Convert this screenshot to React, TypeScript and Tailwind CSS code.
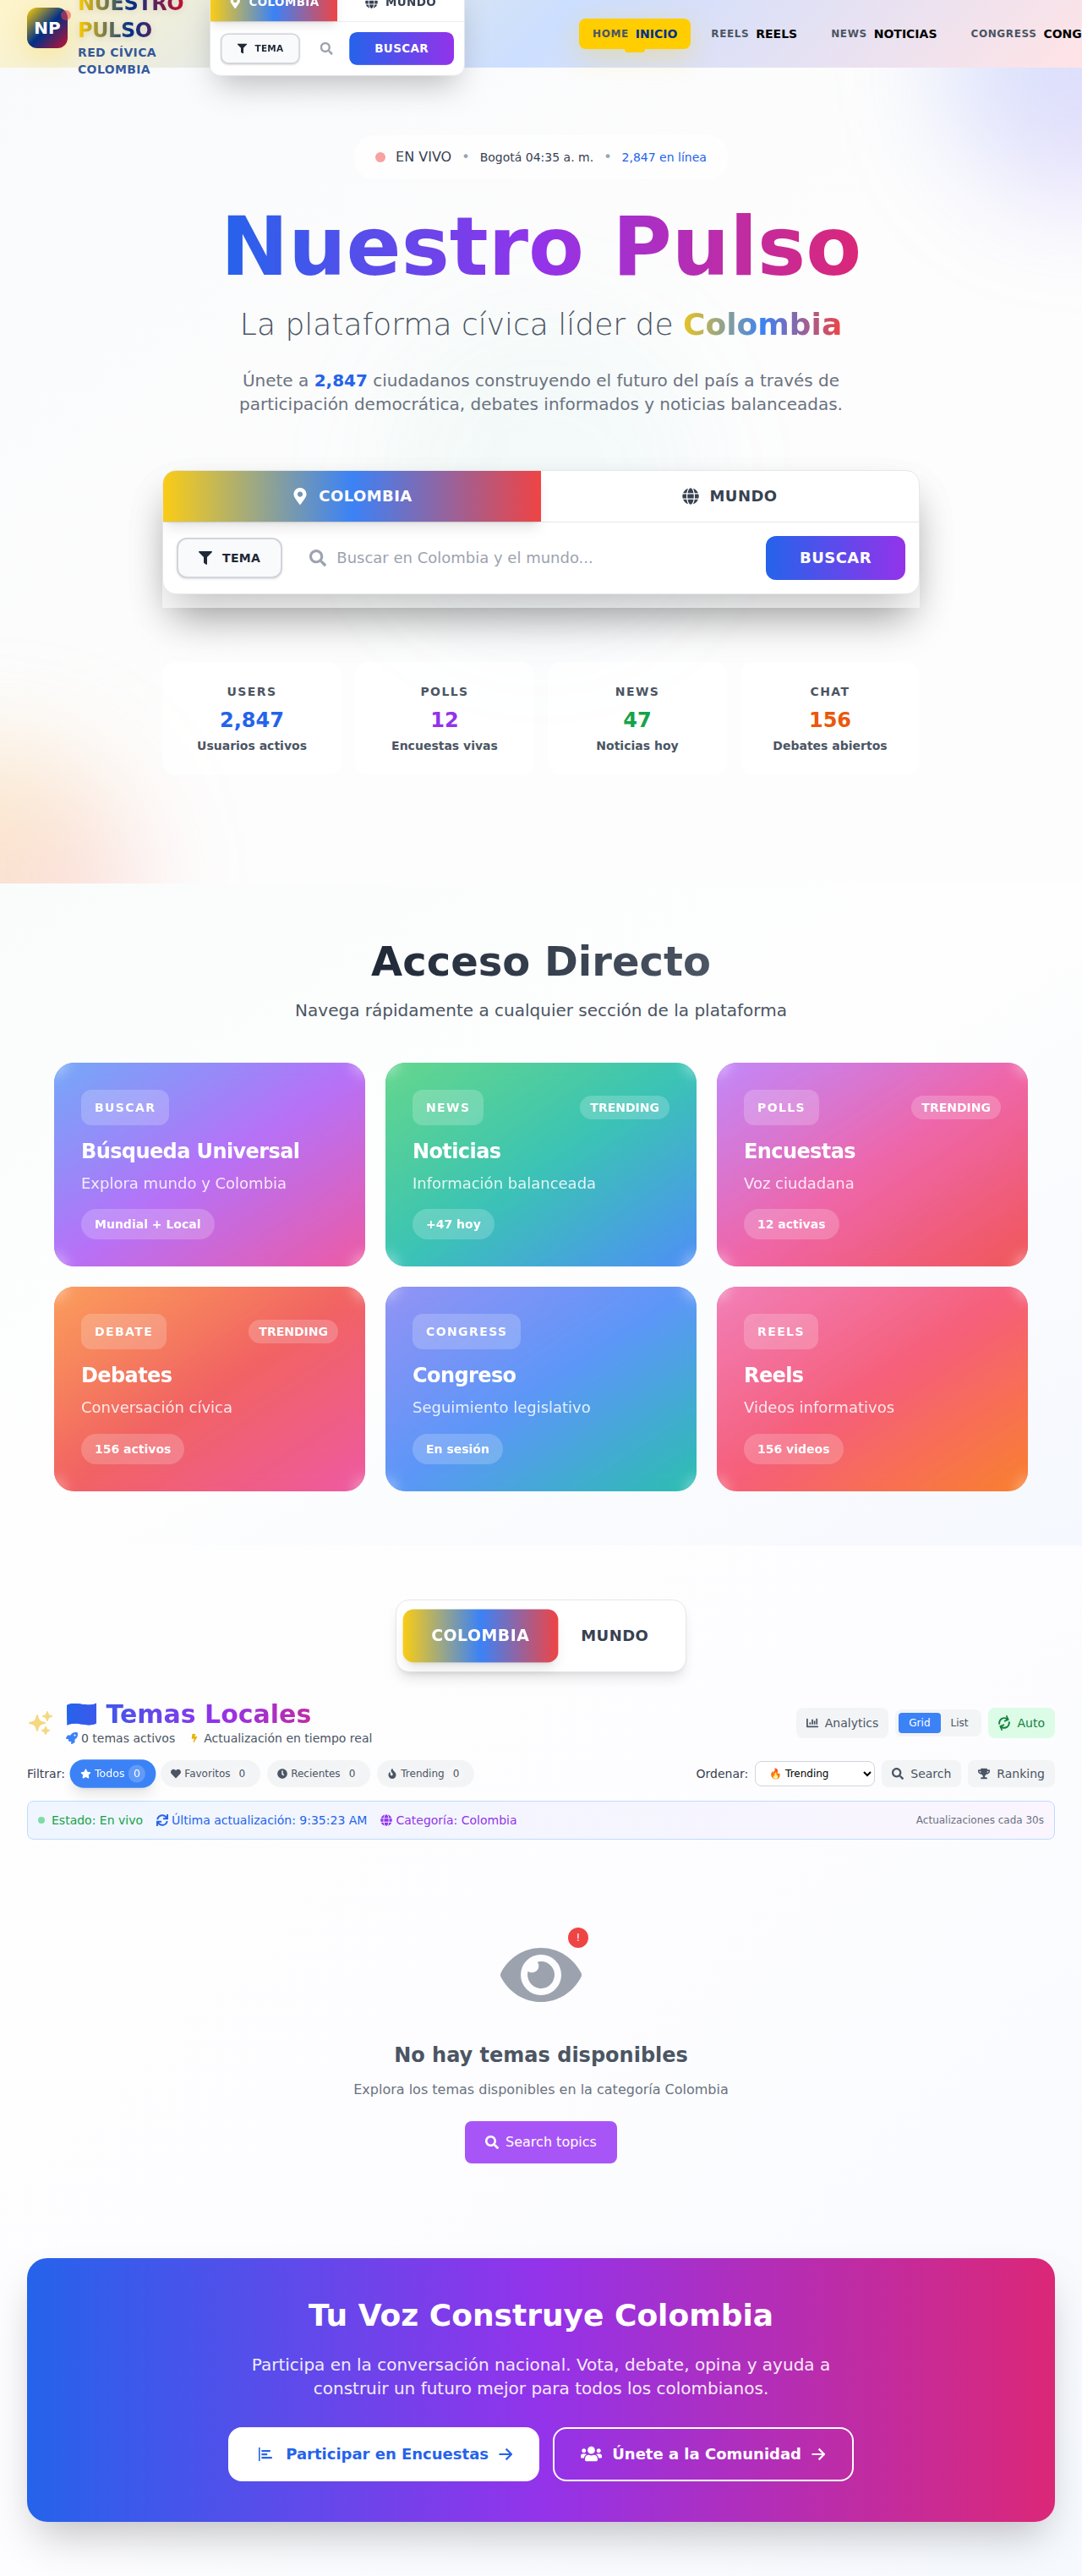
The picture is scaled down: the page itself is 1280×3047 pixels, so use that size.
import React from "react";
import {
  FaMapMarkerAlt,
  FaGlobe,
  FaFilter,
  FaSearch,
  FaRocket,
  FaBolt,
  FaChartBar,
  FaSync,
  FaStar,
  FaHeart,
  FaClock,
  FaFire,
  FaTrophy,
  FaEye,
  FaUsers,
} from "react-icons/fa";
import { HiSparkles } from "react-icons/hi2";

function ArrowIcon() {
  return (
    <svg className="h-4 w-4" viewBox="0 0 16 16" fill="none" stroke="currentColor" strokeWidth="2.2">
      <path d="M0.5 8h14M8.6 1.6 15 8l-6.4 6.4" />
    </svg>
  );
}

function PollIcon() {
  return (
    <svg className="h-4 w-4" viewBox="0 0 16 16" fill="currentColor">
      <path d="M0 0h1.6v16H0zM3.4 3h10.4v2.2H3.4zM3.4 7h6.8v2.2H3.4zM3.4 11h12.4v2.2H3.4z" />
    </svg>
  );
}

function SearchWidget({ placeholder }: { placeholder: string }) {
  return (
    <div className="mb-4 w-full overflow-hidden rounded-2xl border border-[#e5e7eb] bg-white shadow-[0_25px_50px_-12px_rgba(0,0,0,0.25)]">
      <div className="flex border-b border-[#e5e7eb]">
        <div className="flex h-[60px] flex-1 items-center justify-center gap-3 bg-[linear-gradient(to_right,#facc15,#3b82f6,#ef4444)] text-lg font-bold tracking-wide text-white shadow-[0_10px_15px_-3px_rgba(0,0,0,0.1),0_4px_6px_-4px_rgba(0,0,0,0.1)]">
          <FaMapMarkerAlt className="h-5 w-5" />
          COLOMBIA
        </div>
        <div className="flex h-[60px] flex-1 items-center justify-center gap-3 text-lg font-bold tracking-wide text-[#374151]">
          <FaGlobe className="h-5 w-5" />
          MUNDO
        </div>
      </div>
      <div className="flex items-center gap-4 p-4">
        <div className="flex h-12 shrink-0 items-center gap-3 rounded-xl border-2 border-[#d1d5db] bg-[#f9fafb] px-6 text-sm font-bold tracking-wide text-[#1f2937] shadow-sm">
          <FaFilter className="h-4 w-4" />
          TEMA
        </div>
        <div className="flex min-w-0 flex-1 items-center gap-3 px-4">
          <FaSearch className="h-5 w-5 shrink-0 text-[#9ca3af]" />
          <input
            className="w-full min-w-0 text-lg text-[#111827] outline-none placeholder:text-[#9ca3af]"
            placeholder={placeholder}
          />
        </div>
        <div className="shrink-0 rounded-xl bg-[linear-gradient(to_right,#2563eb,#9333ea)] px-10 py-3 text-lg font-bold tracking-wide text-white">
          BUSCAR
        </div>
      </div>
    </div>
  );
}

const navItems = [
  { tag: "HOME", label: "INICIO", active: true },
  { tag: "REELS", label: "REELS" },
  { tag: "NEWS", label: "NOTICIAS" },
  { tag: "CONGRESS", label: "CONGRESO" },
];

function Header() {
  return (
    <header className="relative z-10 flex h-20 items-center bg-[linear-gradient(135deg,rgba(255,205,0,0.2)_0%,rgba(0,94,255,0.2)_50%,rgba(255,30,50,0.12)_100%)] pl-8">
      <div className="flex shrink-0 items-center gap-3">
        <div className="relative h-12 w-12">
          <div className="flex h-12 w-12 -translate-y-[7px] items-center justify-center rounded-xl bg-[linear-gradient(135deg,#ffcd00_0%,#003087_50%,#c8102e_100%)] text-xl font-bold text-white shadow-[0_8px_32px_rgba(255,205,0,0.3)]">
            NP
          </div>
          <div className="absolute -right-1 -top-1 h-3 w-3 rounded-full bg-[#ef4444]/55" />
        </div>
        <div className="w-[125px]">
          <div className="bg-[linear-gradient(90deg,#ffcd00_0%,#003087_50%,#c8102e_100%)] bg-clip-text text-2xl font-bold tracking-[-0.02em] text-transparent drop-shadow-[0_2px_4px_rgba(0,0,0,0.1)]">
            NUESTRO PULSO
          </div>
          <div className="text-sm font-bold tracking-wide text-[#003087]/80">RED CÍVICA COLOMBIA</div>
        </div>
      </div>
      <div className="ml-[31px] flex w-[302px] shrink-0 items-center justify-center">
        <div className="w-[402px] shrink-0 scale-75">
          <SearchWidget placeholder="" />
        </div>
      </div>
      <nav className="ml-[135px] flex shrink-0 items-center gap-2">
        {navItems.map((n) => (
          <div
            key={n.tag}
            className={
              n.active
                ? "relative flex h-9 items-center gap-2 rounded-lg bg-[#ffcd00] px-4 text-[#003087] shadow-[0_8px_32px_rgba(255,205,0,0.3)]"
                : "flex h-9 items-center gap-2 rounded-lg px-4 text-black"
            }
          >
            <span className="text-xs font-bold tracking-wider text-[#4b5563]">{n.tag}</span>
            <span className="text-sm font-bold">{n.label}</span>
            {n.active && (
              <span className="absolute -bottom-1 left-1/2 h-1 w-6 -translate-x-1/2 rounded-b-sm bg-[#ffcd00]" />
            )}
          </div>
        ))}
      </nav>
    </header>
  );
}

const stats = [
  { tag: "USERS", value: "2,847", label: "Usuarios activos", color: "text-[#2563eb]" },
  { tag: "POLLS", value: "12", label: "Encuestas vivas", color: "text-[#9333ea]" },
  { tag: "NEWS", value: "47", label: "Noticias hoy", color: "text-[#16a34a]" },
  { tag: "CHAT", value: "156", label: "Debates abiertos", color: "text-[#ea580c]" },
];

function Hero() {
  return (
    <section className="relative h-[965px] overflow-hidden bg-[linear-gradient(to_bottom_right,#f9fafc,#fdfdfd,#fdfdfe)] pt-20">
      <div className="absolute -right-40 -top-40 h-80 w-80 rounded-full bg-[linear-gradient(to_bottom_right,rgba(96,165,250,0.28),rgba(192,132,252,0.28))] blur-3xl" />
      <div className="absolute -bottom-40 -left-40 h-80 w-80 rounded-full bg-[linear-gradient(to_bottom_right,rgba(250,204,21,0.28),rgba(244,114,182,0.28))] blur-3xl" />
      <div className="absolute left-1/2 top-1/2 h-96 w-96 -translate-x-1/2 -translate-y-1/2 rounded-full bg-[linear-gradient(to_bottom_right,rgba(74,222,128,0.05),rgba(96,165,250,0.06))] blur-3xl" />
      <div className="relative mx-auto flex w-[896px] flex-col items-center text-center">
        <div className="flex h-[52px] items-center gap-3 rounded-3xl bg-white/80 px-[25px]">
          <span className="h-3 w-3 rounded-full bg-[#ef4444]/50" />
          <span className="text-base text-[#374151]">EN VIVO</span>
          <span className="text-base text-[#9ca3af]">•</span>
          <span className="text-sm text-[#374151]">Bogotá 04:35 a. m.</span>
          <span className="text-base text-[#9ca3af]">•</span>
          <span className="text-sm text-[#2563eb]">2,847 en línea</span>
        </div>
        <h1 className="mt-8 bg-[linear-gradient(to_right,#2563eb,#9333ea,#db2777)] bg-clip-text text-[96px] font-bold leading-none text-transparent">
          Nuestro Pulso
        </h1>
        <h2 className="mt-6 text-4xl font-extralight text-[#4b5563]">
          La plataforma cívica líder de{" "}
          <span className="bg-[linear-gradient(to_right,#e8c420,#3b82f6,#ef4444)] bg-clip-text font-bold text-transparent">
            Colombia
          </span>
        </h2>
        <p className="mt-8 w-[768px] text-xl leading-7 text-[#6b7280]">
          Únete a <span className="font-bold text-[#2563eb]">2,847</span> ciudadanos construyendo el futuro del país a
          través de participación democrática, debates informados y noticias balanceadas.
        </p>
        <div className="mt-16 flow-root w-full text-left shadow-[0_25px_50px_-12px_rgba(0,0,0,0.25)]">
          <SearchWidget placeholder="Buscar en Colombia y el mundo..." />
        </div>
        <div className="mt-16 grid w-full grid-cols-4 gap-4">
          {stats.map((s) => (
            <div key={s.tag} className="rounded-2xl bg-white/80 p-[25px]">
              <div className="text-sm font-bold tracking-widest text-[#4b5563]">{s.tag}</div>
              <div className={`mt-2 text-2xl font-bold ${s.color}`}>{s.value}</div>
              <div className="mt-1 text-sm font-bold text-[#4b5563]">{s.label}</div>
            </div>
          ))}
        </div>
      </div>
    </section>
  );
}

const cards = [
  {
    tag: "BUSCAR",
    title: "Búsqueda Universal",
    desc: "Explora mundo y Colombia",
    pill: "Mundial + Local",
    bg: "bg-[linear-gradient(to_bottom_right,#3b82f6,#a855f7,#ec4899)]",
  },
  {
    tag: "NEWS",
    title: "Noticias",
    desc: "Información balanceada",
    pill: "+47 hoy",
    trending: true,
    bg: "bg-[linear-gradient(to_bottom_right,#22c55e,#14b8a6,#3b82f6)]",
  },
  {
    tag: "POLLS",
    title: "Encuestas",
    desc: "Voz ciudadana",
    pill: "12 activas",
    trending: true,
    bg: "bg-[linear-gradient(to_bottom_right,#a855f7,#ec4899,#ef4444)]",
  },
  {
    tag: "DEBATE",
    title: "Debates",
    desc: "Conversación cívica",
    pill: "156 activos",
    trending: true,
    bg: "bg-[linear-gradient(to_bottom_right,#f97316,#ef4444,#ec4899)]",
  },
  {
    tag: "CONGRESS",
    title: "Congreso",
    desc: "Seguimiento legislativo",
    pill: "En sesión",
    bg: "bg-[linear-gradient(to_bottom_right,#6366f1,#3b82f6,#14b8a6)]",
  },
  {
    tag: "REELS",
    title: "Reels",
    desc: "Videos informativos",
    pill: "156 videos",
    bg: "bg-[linear-gradient(to_bottom_right,#ec4899,#f43f5e,#f97316)]",
  },
];

function QuickAccess() {
  return (
    <section className="bg-[linear-gradient(to_bottom_right,#fafcfc,#fefefe,#f5f8fe)] py-16">
      <div className="mx-auto w-[1152px] text-center">
        <h2 className="flex justify-center text-5xl font-bold leading-[56px]">
          <span className="bg-[linear-gradient(to_right,#1f2937,#4b5563)] bg-clip-text text-transparent">
            Acceso Directo
          </span>
        </h2>
        <p className="mt-4 text-xl leading-7 text-[#4b5563]">Navega rápidamente a cualquier sección de la plataforma</p>
        <div className="mt-12 grid grid-cols-3 gap-6 text-left">
          {cards.map((c) => (
            <div key={c.tag} className={`relative overflow-hidden rounded-3xl ${c.bg}`}>
              <div className="absolute inset-0 bg-[linear-gradient(to_bottom_right,rgba(255,255,255,0.3),rgba(255,255,255,0.17),rgba(255,255,255,0.1))] backdrop-blur-sm" />
              <div className="relative flex flex-col items-start p-8 text-white">
                <div className="flex w-full items-center justify-between">
                  <span className="flex h-[41.5px] items-center rounded-xl bg-white/20 px-4 text-sm font-bold tracking-widest">
                    {c.tag}
                  </span>
                  {c.trending && (
                    <span className="rounded-full bg-white/20 px-3 py-1 text-sm font-bold">TRENDING</span>
                  )}
                </div>
                <h3 className="mt-[15.4px] text-2xl font-bold tracking-tight">{c.title}</h3>
                <p className="mt-2 text-lg leading-7 text-white/85">{c.desc}</p>
                <span className="mt-[16.6px] rounded-full bg-white/20 px-4 py-2 text-sm font-bold">{c.pill}</span>
              </div>
            </div>
          ))}
        </div>
      </div>
    </section>
  );
}

const filters = [
  { label: "Favoritos", icon: FaHeart },
  { label: "Recientes", icon: FaClock },
  { label: "Trending", icon: FaFire },
];

function Topics() {
  return (
    <div className="px-8 pt-16">
      <div className="flex justify-center">
        <div className="flex rounded-2xl border border-[#e5e7eb] bg-white p-3 shadow-[0_10px_15px_-3px_rgba(0,0,0,0.1),0_4px_6px_-4px_rgba(0,0,0,0.1)]">
          <div className="scale-105 rounded-xl bg-[linear-gradient(to_right,#facc15,#3b82f6,#ef4444)] px-8 py-4 text-lg font-bold tracking-wide text-white shadow-[0_10px_15px_-3px_rgba(0,0,0,0.1),0_4px_6px_-4px_rgba(0,0,0,0.1)]">
            COLOMBIA
          </div>
          <div className="rounded-xl px-8 py-4 text-lg font-bold tracking-wide text-[#374151]">MUNDO</div>
        </div>
      </div>

      <div className="mt-8 flex items-center justify-between">
        <div className="flex items-center gap-3.5">
          <HiSparkles className="h-8 w-8 text-[#f0c030] opacity-60" />
          <div>
            <h2 className="bg-[linear-gradient(to_right,#2563eb,#9333ea,#db2777)] bg-clip-text text-3xl font-bold leading-9 text-transparent">
              🇨🇴 Temas Locales
            </h2>
            <div className="flex items-center gap-4 text-sm text-[#4b5563]">
              <span className="flex items-center gap-1">
                <FaRocket className="text-[#3b82f6]" />0 temas activos
              </span>
              <span className="flex items-center gap-1">
                <FaBolt className="scale-75 text-[#eab308]" />
                Actualización en tiempo real
              </span>
            </div>
          </div>
        </div>
        <div className="flex items-center gap-2 text-sm text-[#4b5563]">
          <div className="flex items-center gap-2 rounded-lg bg-[#f3f4f6] px-3 py-2">
            <FaChartBar />
            Analytics
          </div>
          <div className="flex rounded-lg bg-[#f3f4f6] p-1 text-xs">
            <span className="rounded bg-[#3b82f6] px-3 py-1 text-white">Grid</span>
            <span className="px-3 py-1">List</span>
          </div>
          <div className="flex items-center gap-2 rounded-lg bg-[#dcfce7] px-3 py-2 text-[#15803d]">
            <FaSync className="-rotate-[25deg]" />
            Auto
          </div>
        </div>
      </div>

      <div className="mt-4 flex items-center justify-between text-sm text-[#374151]">
        <div className="flex items-center gap-2">
          <span>Filtrar:</span>
          <span className="flex scale-105 items-center gap-1 rounded-full bg-[#3b82f6] px-3 py-1.5 text-xs text-white shadow-[0_10px_15px_-3px_rgba(0,0,0,0.1),0_4px_6px_-4px_rgba(0,0,0,0.1)]">
            <FaStar />
            Todos
            <span className="rounded-full bg-white/20 px-1.5 py-0.5">0</span>
          </span>
          {filters.map(({ label, icon: Icon }) => (
            <span
              key={label}
              className="flex items-center gap-1 rounded-full bg-[#f3f4f6] px-3 py-1.5 text-xs text-[#4b5563]"
            >
              <Icon />
              {label}
              <span className="rounded-full bg-white/20 px-1.5 py-0.5">0</span>
            </span>
          ))}
        </div>
        <div className="flex items-center gap-2">
          <span>Ordenar:</span>
          <select className="h-[30px] w-[142px] rounded-lg border border-[#d1d5db] bg-white px-3 text-xs text-black">
            <option>🔥 Trending</option>
          </select>
          <span className="flex items-center gap-2 rounded-lg bg-[#f3f4f6] px-3 py-1.5 text-[#4b5563]">
            <FaSearch />
            Search
          </span>
          <span className="flex items-center gap-2 rounded-lg bg-[#f3f4f6] px-3 py-1.5 text-[#4b5563]">
            <FaTrophy />
            Ranking
          </span>
        </div>
      </div>

      <div className="mt-4 flex items-center justify-between rounded-lg border border-[#bfdbfe] bg-[linear-gradient(to_right,#eff6ff,#faf5ff)] p-3 text-sm">
        <div className="flex items-center gap-4">
          <span className="flex items-center gap-2 text-[#16a34a]">
            <span className="h-2 w-2 rounded-full bg-[#22c55e]/55" />
            Estado: En vivo
          </span>
          <span className="flex items-center gap-1 text-[#2563eb]">
            <FaSync />
            Última actualización: 9:35:23 AM
          </span>
          <span className="flex items-center gap-1 text-[#9333ea]">
            <FaGlobe />
            Categoría: Colombia
          </span>
        </div>
        <span className="text-xs text-[#6b7280]">Actualizaciones cada 30s</span>
      </div>

      <div className="mt-28 flex flex-col items-center">
        <div className="relative">
          <FaEye className="h-24 w-24 text-[#9ca3af]" />
          <span className="absolute -right-2 -top-2 flex h-6 w-6 items-center justify-center rounded-full bg-[#ef4444] text-xs text-white">
            !
          </span>
        </div>
        <h3 className="mt-[31px] text-2xl font-bold text-[#4b5563]">No hay temas disponibles</h3>
        <p className="mt-[13px] text-base text-[#6b7280]">Explora los temas disponibles en la categoría Colombia</p>
        <div className="mt-[25px] flex h-[50px] items-center gap-2 rounded-lg bg-[#a855f7] px-6 text-base text-white">
          <FaSearch />
          Search topics
        </div>
      </div>
    </div>
  );
}

function CallToAction() {
  return (
    <div className="mx-8 mt-28 mb-16 rounded-3xl bg-[linear-gradient(to_right,#2563eb,#9333ea,#db2777)] p-12 text-center text-white shadow-[0_25px_50px_-12px_rgba(0,0,0,0.25)]">
      <h2 className="text-4xl font-bold">Tu Voz Construye Colombia</h2>
      <p className="mx-auto mt-6 w-[768px] text-xl leading-7 text-white/90">
        Participa en la conversación nacional. Vota, debate, opina y ayuda a<br />
        construir un futuro mejor para todos los colombianos.
      </p>
      <div className="mt-8 flex justify-center gap-4 text-lg font-bold">
        <div className="flex h-16 w-[368px] items-center justify-between rounded-2xl bg-white pl-9 pr-8 text-[#2563eb]">
          <PollIcon />
          <span className="flex items-center gap-3">
            Participar en Encuestas
            <ArrowIcon />
          </span>
        </div>
        <div className="flex h-16 w-[356px] items-center justify-between rounded-2xl border-2 border-white pl-[31px] pr-8">
          <FaUsers className="h-[25px] w-[25px]" />
          <span className="flex items-center gap-3">
            Únete a la Comunidad
            <ArrowIcon />
          </span>
        </div>
      </div>
    </div>
  );
}

export default function App() {
  return (
    <div className="w-full overflow-x-clip bg-white font-['DejaVu_Sans',sans-serif]">
      <Header />
      <Hero />
      <QuickAccess />
      <section className="flow-root bg-[linear-gradient(to_bottom_right,#fefefe,#fdfdff,#f6f9fe)]">
        <Topics />
        <CallToAction />
      </section>
    </div>
  );
}
